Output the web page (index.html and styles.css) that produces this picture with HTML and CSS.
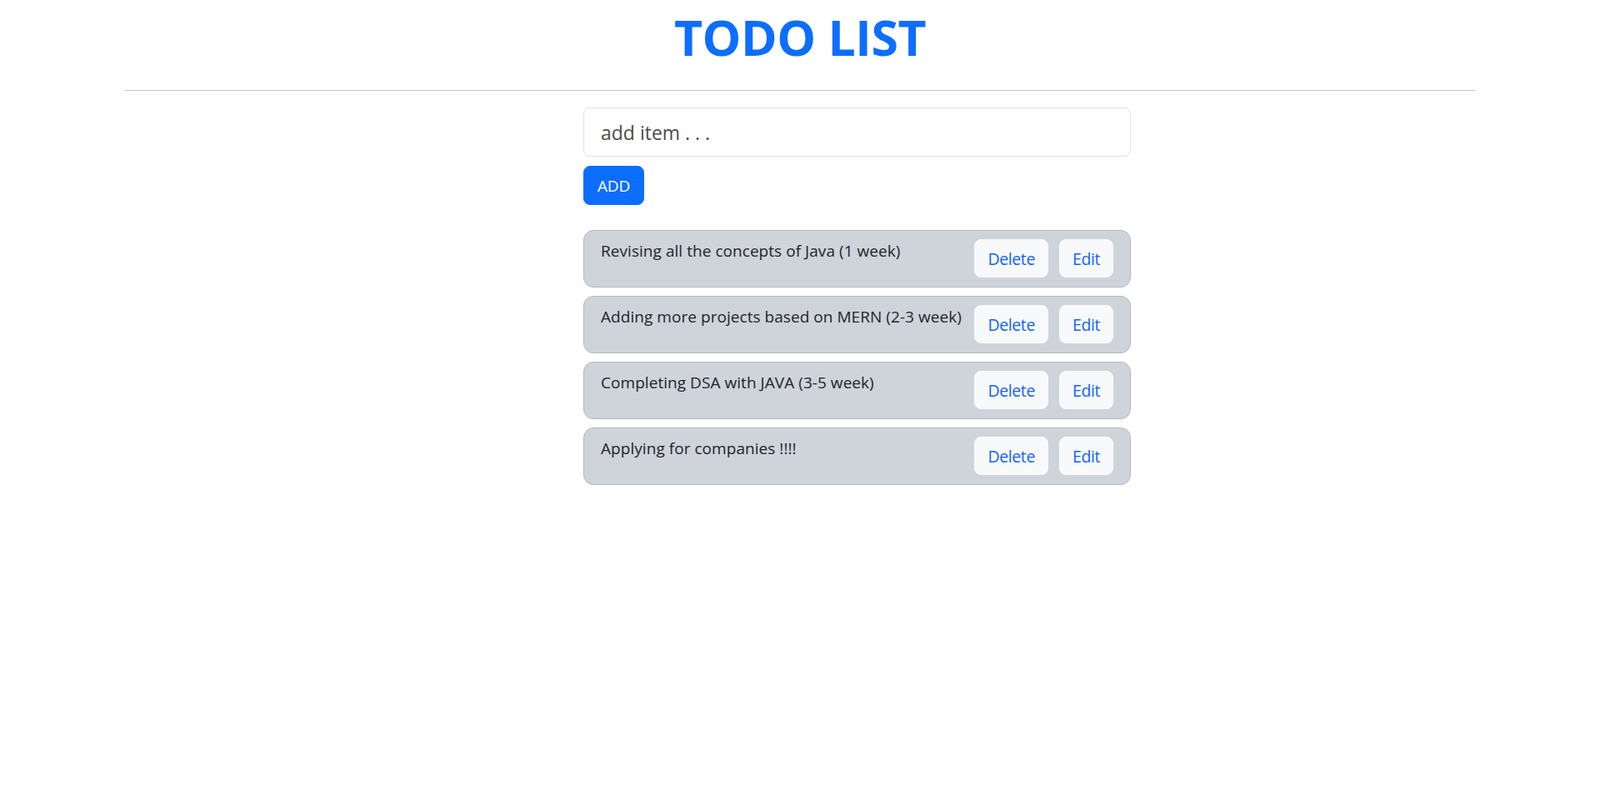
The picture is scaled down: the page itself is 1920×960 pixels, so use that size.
FILE: index.html
```html
<!DOCTYPE html>
<html lang="en">
<head>
<meta charset="utf-8">
<title>Todo List</title>
<link rel="stylesheet" href="styles.css">
</head>
<body>
  <h1 class="title">TODO LIST</h1>
  <hr class="divider">
  <main class="todo">
    <input class="todo-input" type="text" placeholder="add item . . .">
    <button class="btn-add" type="button">ADD</button>
    <ul class="todo-list">
      <li class="todo-item">
        <span class="todo-text">Revising all the concepts of Java (1 week)</span>
        <div class="todo-actions">
          <button class="btn-light" type="button">Delete</button>
          <button class="btn-light" type="button">Edit</button>
        </div>
      </li>
      <li class="todo-item">
        <span class="todo-text">Adding more projects based on MERN (2-3 week)</span>
        <div class="todo-actions">
          <button class="btn-light" type="button">Delete</button>
          <button class="btn-light" type="button">Edit</button>
        </div>
      </li>
      <li class="todo-item">
        <span class="todo-text">Completing DSA with JAVA (3-5 week)</span>
        <div class="todo-actions">
          <button class="btn-light" type="button">Delete</button>
          <button class="btn-light" type="button">Edit</button>
        </div>
      </li>
      <li class="todo-item">
        <span class="todo-text">Applying for companies !!!!</span>
        <div class="todo-actions">
          <button class="btn-light" type="button">Delete</button>
          <button class="btn-light" type="button">Edit</button>
        </div>
      </li>
    </ul>
  </main>
</body>
</html>
```

FILE: styles.css
```css
* { box-sizing: border-box; }

body {
  margin: 0;
  background: #ffffff;
  font-family: "Open Sans", "Noto Sans", Arial, sans-serif;
  color: #212529;
}

.title {
  margin: 0;
  padding-top: 8px;
  font-size: 59px;
  line-height: 72px;
  font-weight: 700;
  text-align: center;
  color: #0d6efd;
  letter-spacing: -0.5px;
}

.divider {
  width: 1620px;
  margin: 28px auto 0;
  border: 0;
  border-top: 1px solid #c6c6c6;
  height: 0;
}

.todo {
  width: 657px;
  margin-left: 700px;
  padding-top: 20px;
}

.todo-input {
  display: block;
  width: 100%;
  height: 59px;
  padding: 0 20px;
  font-family: inherit;
  font-size: 23px;
  color: #212529;
  background: #fff;
  border: 1px solid #dee2e6;
  border-radius: 8px;
  outline: none;
}

.todo-input::placeholder {
  color: #4f4a47;
  opacity: 1;
}

.btn-add {
  display: block;
  margin-top: 11px;
  height: 47px;
  padding: 0 16px;
  font-family: inherit;
  font-size: 19px;
  color: #fff;
  background: #0d6efd;
  border: 1px solid #0d6efd;
  border-radius: 8px;
  letter-spacing: -0.2px;
}

.todo-list {
  list-style: none;
  margin: 30px 0 0;
  padding: 0;
  display: flex;
  flex-direction: column;
  gap: 10px;
}

.todo-item {
  display: flex;
  justify-content: space-between;
  align-items: flex-start;
  height: 69px;
  padding: 10px 20px 0 20px;
  background: #ced4da;
  border: 1px solid #b3b9bf;
  border-radius: 12px;
}

.todo-text {
  margin-top: 1px;
  font-size: 19px;
  line-height: 27px;
  letter-spacing: 0.05px;
  color: #212529;
}

.todo-actions {
  display: flex;
  gap: 13px;
}

.btn-light {
  height: 46px;
  padding: 0 15px;
  font-family: inherit;
  font-size: 19.5px;
  letter-spacing: -0.4px;
  color: #1163fb;
  background: #f8f9fa;
  border: 1px solid #f8f9fa;
  border-radius: 8px;
}
```
